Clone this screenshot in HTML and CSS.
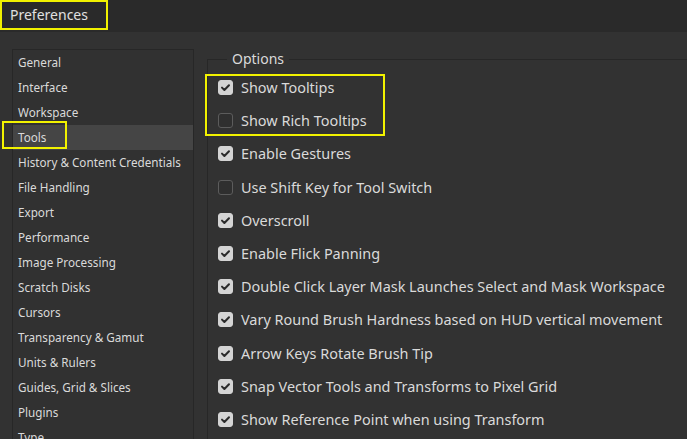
FILE: index.html
```html
<!DOCTYPE html>
<html>
<head>
<meta charset="utf-8">
<link rel="stylesheet" href="styles.css">
</head>
<body>
<div class="titlebar"><span class="title">Preferences</span></div>
<div class="main">
  <ul class="sidebar">
    <li>General</li>
    <li>Interface</li>
    <li>Workspace</li>
    <li class="sel">Tools</li>
    <li>History &amp; Content Credentials</li>
    <li>File Handling</li>
    <li>Export</li>
    <li>Performance</li>
    <li>Image Processing</li>
    <li>Scratch Disks</li>
    <li>Cursors</li>
    <li>Transparency &amp; Gamut</li>
    <li>Units &amp; Rulers</li>
    <li>Guides, Grid &amp; Slices</li>
    <li>Plugins</li>
    <li>Type</li>
  </ul>
  <div class="group">
    <div class="legend">Options</div>
    <ul class="opts">
      <li><span class="cb on"><svg viewBox="0 0 15 15"><path d="M4 7.6 L6.4 10 L11 5.2"/></svg></span>Show Tooltips</li>
      <li><span class="cb"></span>Show Rich Tooltips</li>
      <li><span class="cb on"><svg viewBox="0 0 15 15"><path d="M4 7.6 L6.4 10 L11 5.2"/></svg></span>Enable Gestures</li>
      <li><span class="cb"></span>Use Shift Key for Tool Switch</li>
      <li><span class="cb on"><svg viewBox="0 0 15 15"><path d="M4 7.6 L6.4 10 L11 5.2"/></svg></span>Overscroll</li>
      <li><span class="cb on"><svg viewBox="0 0 15 15"><path d="M4 7.6 L6.4 10 L11 5.2"/></svg></span>Enable Flick Panning</li>
      <li><span class="cb on"><svg viewBox="0 0 15 15"><path d="M4 7.6 L6.4 10 L11 5.2"/></svg></span>Double Click Layer Mask Launches Select and Mask Workspace</li>
      <li><span class="cb on"><svg viewBox="0 0 15 15"><path d="M4 7.6 L6.4 10 L11 5.2"/></svg></span>Vary Round Brush Hardness based on HUD vertical movement</li>
      <li><span class="cb on"><svg viewBox="0 0 15 15"><path d="M4 7.6 L6.4 10 L11 5.2"/></svg></span>Arrow Keys Rotate Brush Tip</li>
      <li><span class="cb on"><svg viewBox="0 0 15 15"><path d="M4 7.6 L6.4 10 L11 5.2"/></svg></span>Snap Vector Tools and Transforms to Pixel Grid</li>
      <li><span class="cb on"><svg viewBox="0 0 15 15"><path d="M4 7.6 L6.4 10 L11 5.2"/></svg></span>Show Reference Point when using Transform</li>
    </ul>
  </div>
</div>
<div class="hl hl-title"></div>
<div class="hl hl-tools"></div>
<div class="hl hl-opts"></div>
</body>
</html>
```
FILE: styles.css
```css
html, body {
  margin: 0;
  padding: 0;
  background: #323232;
  color: #dadada;
  font-family: "Noto Sans", "DejaVu Sans", sans-serif;
  overflow: hidden;
  height: 439px;
}
.titlebar {
  height: 32px;
  background: #2a2a2a;
  display: flex;
  align-items: center;
}
.title {
  padding-left: 10px;
  padding-bottom: 4px;
  font-size: 14px;
  color: #e0e0e0;
}
.main {
  display: flex;
  align-items: flex-start;
  padding-top: 17px;
  padding-left: 12px;
  gap: 13px;
}
.sidebar {
  list-style: none;
  margin: 0;
  padding: 0;
  width: 180px;
  height: 420px;
  border: 1px solid #272727;
  background: #313131;
  flex: none;
}
.sidebar li {
  height: 25px;
  line-height: 25px;
  padding-left: 5px;
  font-size: 11.7px;
  white-space: nowrap;
}
.sidebar li.sel {
  background: #454545;
}
.group {
  flex: 1;
  margin-top: 10px;
  border-top: 1px solid #272727;
  border-left: 1px solid #272727;
  height: 400px;
}
.legend {
  width: fit-content;
  margin-top: -11px;
  margin-left: 19px;
  padding: 0 5px;
  background: #323232;
  font-size: 14px;
  line-height: 20px;
}
.opts {
  list-style: none;
  margin: 0;
  padding: 2px 0 0 10px;
}
.opts li {
  height: 33.2px;
  display: flex;
  align-items: center;
  font-size: 14.45px;
  white-space: nowrap;
}
.cb {
  box-sizing: border-box;
  width: 15px;
  height: 15px;
  border-radius: 3px;
  border: 1px solid #5c5c5c;
  background: #2f2f2f;
  margin-right: 8px;
  flex: none;
  display: flex;
}
.cb.on {
  background: #d4d4d4;
  border-color: #d4d4d4;
}
.cb svg {
  width: 15px;
  height: 15px;
  margin: -1px;
}
.cb svg path {
  fill: none;
  stroke: #2a2a2a;
  stroke-width: 2;
  stroke-linecap: round;
  stroke-linejoin: round;
}
.hl {
  position: absolute;
  box-sizing: border-box;
  border: 2px solid #f2f200;
}
.hl-title { left: 0; top: 0; width: 108px; height: 30px; }
.hl-tools { left: 2px; top: 121px; width: 65px; height: 28px; }
.hl-opts { left: 205px; top: 74px; width: 180px; height: 62px; }
```
